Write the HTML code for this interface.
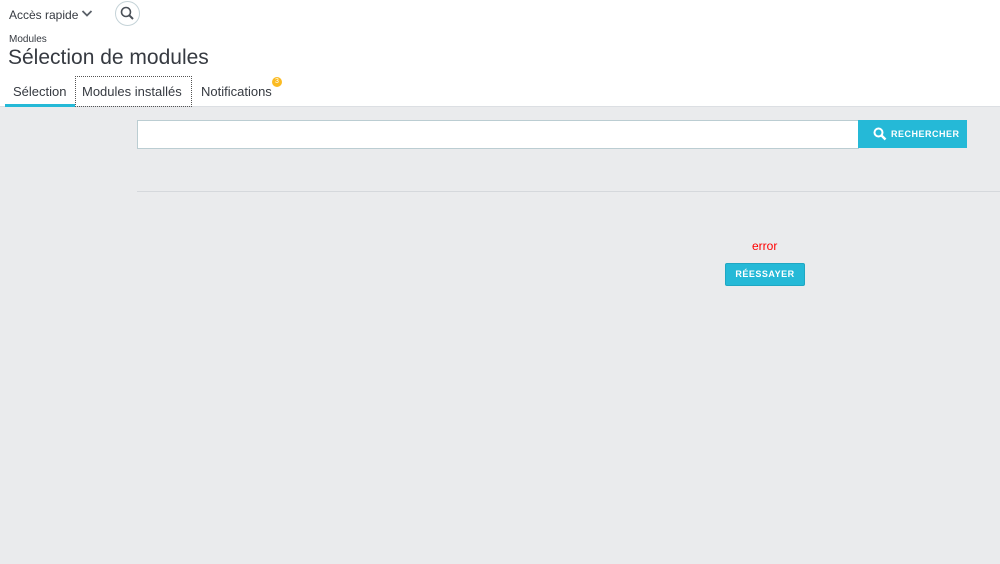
<!DOCTYPE html>
<html><head><meta charset="utf-8"><style>
*{box-sizing:border-box;margin:0;padding:0}
body{width:1000px;height:564px;overflow:hidden;background:#eaebed;font-family:"Liberation Sans",sans-serif;color:#363a41;position:relative}
.hdr{position:absolute;left:0;top:0;width:1000px;height:107px;background:#fff;border-bottom:1px solid #dcdfe3}
.t{position:absolute;white-space:nowrap}
</style></head><body>
<div class="hdr"></div>
<div class="t" style="left:9px;top:8px;font-size:12px">Accès rapide</div>
<svg style="position:absolute;left:81px;top:9px" width="12" height="9"><path d="M1.5 2 L6 6.5 L10.5 2" stroke="#5a6068" stroke-width="1.8" fill="none"/></svg>
<div style="position:absolute;left:115px;top:1px;width:25px;height:25px;border:1px solid #c5d3d8;border-radius:50%"></div>
<svg style="position:absolute;left:119px;top:5px" width="17" height="17"><circle cx="7" cy="7" r="4.5" stroke="#4a5058" stroke-width="1.6" fill="none"/><path d="M10.3 10.3 L14 14" stroke="#4a5058" stroke-width="2"/></svg>
<div class="t" style="left:9px;top:34px;font-size:10px">Modules</div>
<div class="t" style="left:8px;top:46px;font-size:21px">Sélection de modules</div>
<div class="t" style="left:13px;top:84px;font-size:13px">Sélection</div>
<div style="position:absolute;left:5px;top:104px;width:70px;height:3px;background:#25b9d7"></div>
<div style="position:absolute;left:75px;top:76px;width:117px;height:31px;border:1px dotted #555"></div>
<div class="t" style="left:82px;top:84px;font-size:13px">Modules installés</div>
<div class="t" style="left:201px;top:84px;font-size:13px">Notifications</div>
<div style="position:absolute;left:272px;top:77px;width:10px;height:10px;border-radius:50%;background:#fbbb22;color:#fff;font-size:7px;text-align:center;line-height:10px">3</div>
<div style="position:absolute;left:137px;top:120px;width:722px;height:29px;background:#fff;border:1px solid #bbcdd2"></div>
<div style="position:absolute;left:858px;top:120px;width:109px;height:28px;background:#25b9d7"></div>
<svg style="position:absolute;left:873px;top:127px" width="14" height="14"><circle cx="5.5" cy="5.5" r="4" stroke="#fff" stroke-width="2" fill="none"/><path d="M8.5 8.5 L12.5 12.5" stroke="#fff" stroke-width="2.5"/></svg>
<div class="t" style="left:891px;top:129px;font-size:9px;font-weight:bold;color:#fff;letter-spacing:.5px">RECHERCHER</div>
<div style="position:absolute;left:137px;top:191px;width:863px;height:1px;background:#d5d8dc"></div>
<div class="t" style="left:752px;top:239px;font-size:12px;color:#f00">error</div>
<div style="position:absolute;left:725px;top:263px;width:80px;height:23px;background:#25b9d7;border:1px solid #1fa7c3;border-radius:2px;color:#fff;font-size:9px;font-weight:bold;text-align:center;line-height:21px;letter-spacing:.5px">RÉESSAYER</div>
</body></html>
